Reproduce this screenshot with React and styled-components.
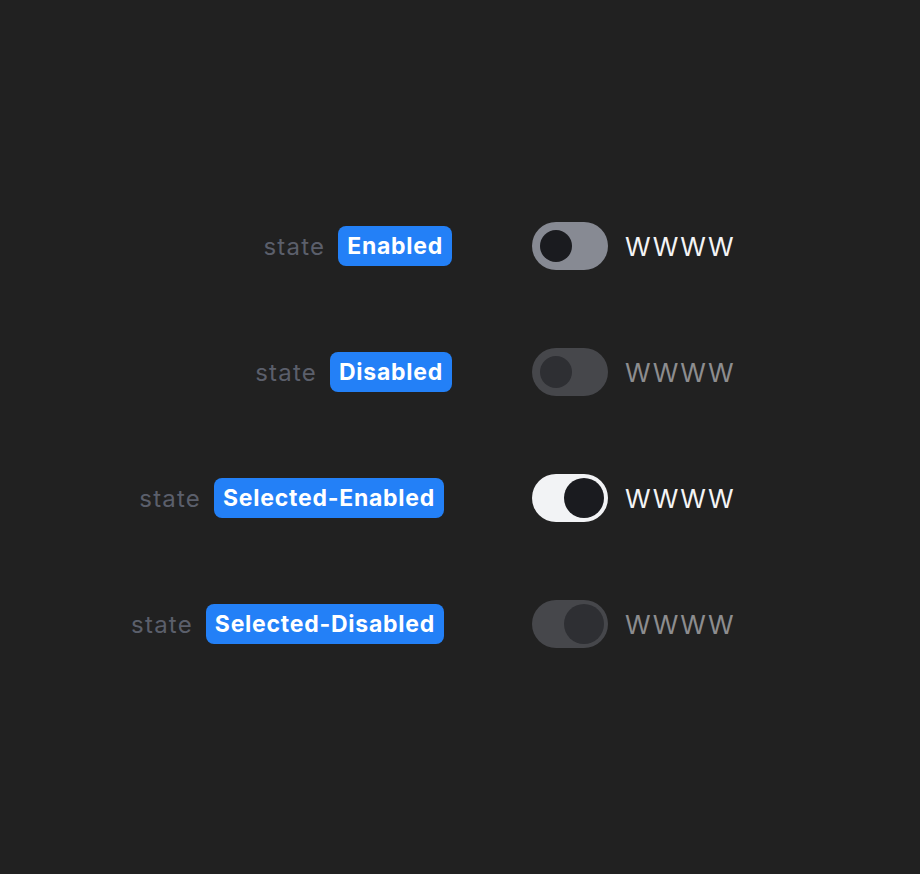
import React from 'react';
import styled, { createGlobalStyle } from 'styled-components';

const GlobalStyle = createGlobalStyle`
  html, body {
    margin: 0;
    padding: 0;
    background: #212121;
  }
  body {
    font-family: Inter, "Noto Sans", "Liberation Sans", sans-serif;
  }
`;

const Page = styled.div`
  box-sizing: border-box;
  min-height: 100vh;
  display: grid;
  grid-template-columns: 452px auto;
  column-gap: 80px;
  row-gap: 78px;
  align-content: center;
  justify-content: start;
  padding-bottom: 4px;
`;

const Label = styled.div`
  display: flex;
  align-items: center;
  justify-content: flex-end;
  gap: 13px;
  height: 48px;
  padding-right: ${({ $offset }) => $offset || 0}px;
`;

const Key = styled.span`
  color: #5b5f6b;
  font-size: 24px;
  letter-spacing: 1.2px;
`;

const Badge = styled.span`
  display: inline-flex;
  align-items: center;
  height: 40px;
  padding: 0 9px;
  border-radius: 8px;
  background: #2380f7;
  color: #ffffff;
  font-size: 23px;
  font-weight: 700;
  letter-spacing: 0.75px;
`;

const Option = styled.label`
  display: flex;
  align-items: center;
  gap: 17px;
  height: 48px;
`;

const Track = styled.span`
  position: relative;
  display: block;
  width: 76px;
  height: 48px;
  border-radius: 24px;
  background: ${({ $on, $disabled }) =>
    $disabled ? '#46474b' : $on ? '#f2f3f5' : '#878a93'};
`;

const Knob = styled.span`
  position: absolute;
  top: ${({ $on }) => ($on ? 4 : 8)}px;
  left: ${({ $on }) => ($on ? 32 : 8)}px;
  width: ${({ $on }) => ($on ? 40 : 32)}px;
  height: ${({ $on }) => ($on ? 40 : 32)}px;
  border-radius: 50%;
  background: ${({ $disabled }) => ($disabled ? '#2e2f33' : '#1a1b1f')};
`;

const Text = styled.span`
  font-size: 26px;
  letter-spacing: 1.4px;
  color: ${({ $disabled }) => ($disabled ? '#8d8d8f' : '#f4f4f5')};
`;

const rows = [
  { name: 'Enabled', on: false, disabled: false, offset: 0 },
  { name: 'Disabled', on: false, disabled: true, offset: 0 },
  { name: 'Selected-Enabled', on: true, disabled: false, offset: 8 },
  { name: 'Selected-Disabled', on: true, disabled: true, offset: 8 },
];

export default function App() {
  return (
    <>
      <GlobalStyle />
      <Page>
        {rows.map(row => (
          <React.Fragment key={row.name}>
            <Label $offset={row.offset}>
              <Key>state</Key>
              <Badge>{row.name}</Badge>
            </Label>
            <Option>
              <Track $on={row.on} $disabled={row.disabled}>
                <Knob $on={row.on} $disabled={row.disabled} />
              </Track>
              <Text $disabled={row.disabled}>WWWW</Text>
            </Option>
          </React.Fragment>
        ))}
      </Page>
    </>
  );
}
